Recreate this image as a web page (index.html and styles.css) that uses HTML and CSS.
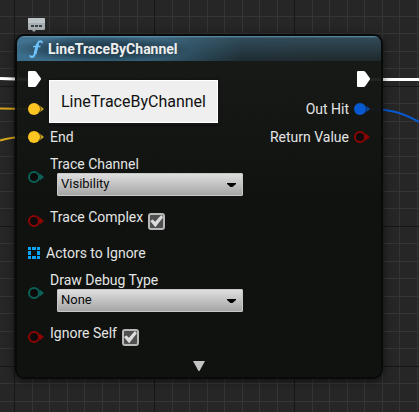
FILE: index.html
```html
<!DOCTYPE html>
<html lang="en">
<head>
<meta charset="utf-8">
<title>LineTraceByChannel</title>
<link rel="stylesheet" href="styles.css">
</head>
<body>
<svg class="defs" width="0" height="0" aria-hidden="true">
  <defs>
    <symbol id="exec" viewBox="0 0 13 16"><path d="M1 0h5.500q1 0 1.700.8l4.500 6.200q.6.900 0 1.800l-4.500 6.400q-.7.800-1.700.8H1q-1 0-1-1V1q0-1 1-1z" fill="#fff"/></symbol>
    <symbol id="full" viewBox="0 0 16 12"><path d="M11.500 2.300 16 6l-4.500 3.700z" fill="currentColor" opacity=".8"/><circle cx="6" cy="6" r="6" fill="currentColor"/><path d="M12 2.500q1.600 3.500 0 7" fill="none" stroke="#111" stroke-opacity=".45"/></symbol>
    <symbol id="ring" viewBox="0 0 16 12"><path d="M11.500 2.300 16 6l-4.500 3.700z" fill="currentColor"/><circle cx="6" cy="6" r="5" fill="#0c0a0a" stroke="currentColor" stroke-width="2"/></symbol>
    <symbol id="array" viewBox="0 0 12 12"><path d="M0 0h3v3H0zM4 0h4v3H4zM9 0h3v3H9zM0 4h3v4H0zM9 4h3v4H9zM0 9h3v3H0zM4 9h4v3H4zM9 9h3v3H9z" fill="#0ba5f5"/></symbol>
  </defs>
</svg>

<main class="graph">
  <svg class="canvas" width="100%" height="100%" aria-hidden="true">
    <defs>
      <pattern id="grid" x="14" y="86" width="140" height="140" patternUnits="userSpaceOnUse">
        <path d="M18.500 0v140M35.500 0v140M53.500 0v140M70.500 0v140M88.500 0v140M105.500 0v140M123.500 0v140M0 17.500h140M0 35.500h140M0 52.500h140M0 70.500h140M0 87.500h140M0 105.500h140M0 122.500h140" stroke="#353535"/>
        <path d="M.5 0v140M0 .5h140" stroke="#161616"/>
      </pattern>
    </defs>
    <rect width="100%" height="100%" fill="url(#grid)"/>
    <g fill="none">
      <path d="M0 78.500 30 79.500M366 79.500H419" stroke="#fff" stroke-width="3"/>
      <path d="M0 108.500 30 109M0 140.500Q10 137 30 137" stroke="#d9a51c" stroke-width="2"/>
      <path d="M366 109C388 108 403 113 419 122" stroke="#0759cf" stroke-width="2"/>
    </g>
  </svg>

  <svg class="bubble" viewBox="0 0 17 14" aria-hidden="true">
    <path d="M1 0h15q1 0 1 1v10q0 1-1 1H8l-2 2-2-2H1q-1 0-1-1V1q0-1 1-1z" fill="#a8afb3"/>
    <path d="M1 0h15q1 0 1 1v4H0V1q0-1 1-1z" fill="#bdc4c8"/>
    <path d="M3 7h3v2H3zM7 7h3v2H7zM11 7h3v2h-3z" fill="#3b4247"/>
  </svg>

  <article class="node">
    <header class="head">
      <svg class="func" viewBox="0 0 14 18" aria-hidden="true"><path d="M13 3.200Q12.800 1 11 1.200 9.300 1.400 8.200 5L6.200 13Q5.100 17 3 17 1.300 17 1.200 15.300" fill="none" stroke="#6fc3fb" stroke-width="2"/><path d="M8.500 4 6 14" stroke="#6fc3fb" stroke-width="3"/><path d="M4 6.500h7.500" stroke="#6fc3fb" stroke-width="1.500"/></svg>
      <h1>LineTraceByChannel</h1>
    </header>
    <div class="pins">
      <div class="inputs">
        <div class="row exec"><svg class="pin tall"><use href="#exec"/></svg></div>
        <div class="row"><svg class="pin yellow"><use href="#full"/></svg></div>
        <div class="row"><svg class="pin yellow"><use href="#full"/></svg><span>End</span></div>
        <div class="row field">
          <svg class="pin teal"><use href="#ring"/></svg>
          <div class="choice">
            <label for="channel">Trace Channel</label>
            <div class="combo"><select id="channel"><option>Visibility</option></select><svg viewBox="0 0 9 4"><path d="M0 0h9v1L5.500 4h-2L0 1z"/></svg></div>
          </div>
        </div>
        <div class="row check"><svg class="pin red"><use href="#ring"/></svg><label for="complex">Trace Complex</label><input type="checkbox" id="complex" checked></div>
        <div class="row actors"><svg class="pin square"><use href="#array"/></svg><span>Actors to Ignore</span></div>
        <div class="row field">
          <svg class="pin teal"><use href="#ring"/></svg>
          <div class="choice">
            <label for="debug">Draw Debug Type</label>
            <div class="combo"><select id="debug"><option>None</option></select><svg viewBox="0 0 9 4"><path d="M0 0h9v1L5.500 4h-2L0 1z"/></svg></div>
          </div>
        </div>
        <div class="row check"><svg class="pin red"><use href="#ring"/></svg><label for="self">Ignore Self</label><input type="checkbox" id="self" checked></div>
      </div>
      <div class="outputs">
        <div class="row exec"><svg class="pin tall"><use href="#exec"/></svg></div>
        <div class="row"><span>Out Hit</span><svg class="pin blue"><use href="#full"/></svg></div>
        <div class="row"><span>Return Value</span><svg class="pin red"><use href="#ring"/></svg></div>
      </div>
    </div>
    <button class="more" aria-label="Show advanced pins"><svg viewBox="0 0 12 10"><path d="M0 0h12L6.500 10h-1z" fill="#c4c4c4"/></svg></button>
    <div class="tip" role="tooltip">LineTraceByChannel</div>
  </article>
</main>
</body>
</html>
```
FILE: styles.css
```css
* { box-sizing: border-box; }
body { margin: 0; background: #262626; color: #e4e4e4; font: 14px/18px Roboto, sans-serif; }
svg { display: block; flex: none; }
.defs { position: absolute; }
.graph { position: relative; min-height: 100vh; padding: 18px 36px 33px 15px; overflow: hidden; }
.canvas { position: absolute; inset: 0; }
.bubble { position: relative; width: 17px; height: 14px; margin-left: 13px; }

.node {
  position: relative;
  margin-top: 2px;
  border: 2px solid #080a0a;
  border-radius: 9px;
  background: linear-gradient(rgba(24, 26, 24, .94), rgba(14, 17, 14, .96) 50%);
  box-shadow: 0 2px 8px rgba(0, 0, 0, .6);
}
.head {
  display: flex;
  align-items: center;
  gap: 5px;
  height: 25px;
  padding-left: 12px;
  border-radius: 7px 7px 0 0;
  background:
    linear-gradient(#5c94b2, transparent 2px),
    radial-gradient(ellipse 90px 13px at 84px 13px, rgba(18, 34, 44, .75), rgba(18, 34, 44, .45) 60%, transparent),
    linear-gradient(rgba(70, 110, 135, .5), rgba(20, 28, 32, .1)),
    linear-gradient(90deg, #3f789a, #386883 35%, #1f2d33 62%, #202a2d);
}
.func { width: 14px; height: 18px; }
h1 { margin: 0; font-size: 14px; line-height: 18px; font-weight: 700; color: #eee; }

.pins { display: flex; justify-content: space-between; padding: 4px 11px 0; }
.row { display: flex; align-items: center; gap: 6px; height: 28px; }
.row span { padding-bottom: 1px; }
.exec { margin-bottom: 2px; }
.outputs .row { justify-content: flex-end; gap: 5px; }
.pin { width: 16px; height: 12px; }
.tall { width: 13px; height: 16px; }
.square { width: 12px; }
.yellow { color: #fdc522; }
.teal { color: #0b6156; }
.red { color: #8b0505; }
.blue { color: #0759cf; }

.field { height: 52px; }
.choice { padding-bottom: 4px; }
.choice label { display: block; }
.combo { position: relative; width: 186px; margin: 0 0 0 7px; }
.combo svg { position: absolute; right: 7px; top: 10px; width: 9px; height: 4px; pointer-events: none; }
select {
  appearance: none;
  display: block;
  width: 100%;
  height: 23px;
  padding: 0 3px;
  border: 1px solid #c8c8c8;
  border-radius: 1px;
  background: linear-gradient(#dedede, #a6a6a6);
  color: #0a0a0a;
  font: 13px/18px Roboto, sans-serif;
}
.check { height: 36px; gap: 8px; }
.check label { margin-left: -2px; margin-right: -3px; padding-bottom: 8px; }
input {
  appearance: none;
  width: 17px;
  height: 17px;
  margin: 0;
  border: 2px solid #b8b8b8;
  border-radius: 3px;
  background: #505050;
  display: grid;
  place-items: center;
}
input:checked::after { content: ""; width: 13px; height: 13px; background: #dcdcdc; clip-path: polygon(0 50%, 20% 38%, 38% 56%, 85% 4%, 100% 22%, 40% 98%); }
.more { display: block; margin: 0 auto; padding: 6px 0; border: 0; background: none; }
.more svg { width: 12px; height: 10px; }

.tip {
  position: absolute;
  left: 32px;
  top: 44px;
  padding: 11px 11px 10px;
  border: 1px solid #fff;
  background: #efefef;
  box-shadow: 0 0 0 2px #141414, 1px 2px 2px #000;
  color: #111;
  font-size: 16px;
  line-height: 20px;
}
```
